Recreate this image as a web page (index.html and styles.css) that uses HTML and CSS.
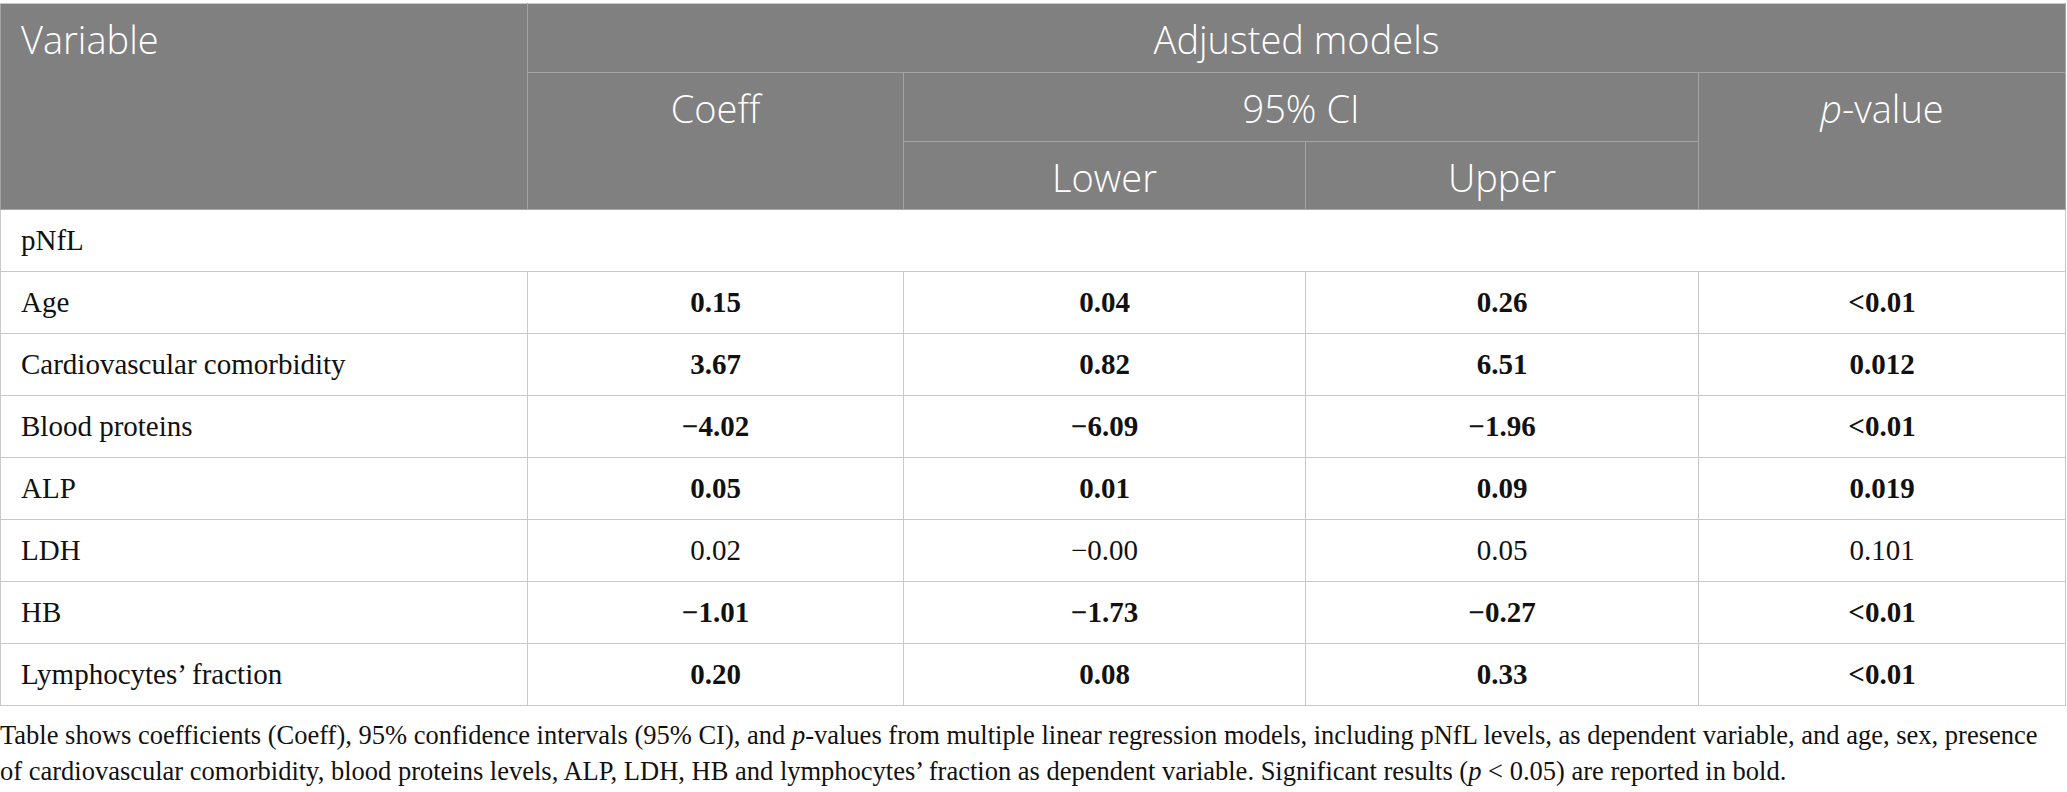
FILE: index.html
```html
<!DOCTYPE html>
<html lang="en">
<head>
<meta charset="utf-8">
<title>Table</title>
<link rel="stylesheet" href="styles.css">
</head>
<body>
<div class="wrap">
<table class="data">
  <colgroup>
    <col class="c1"><col class="c2"><col class="c3"><col class="c4"><col class="c5">
  </colgroup>
  <thead>
    <tr class="h1">
      <th rowspan="3" class="var">Variable</th>
      <th colspan="4">Adjusted models</th>
    </tr>
    <tr class="h2">
      <th rowspan="2">Coeff</th>
      <th colspan="2">95% CI</th>
      <th rowspan="2"><i>p</i>-value</th>
    </tr>
    <tr class="h3">
      <th>Lower</th>
      <th>Upper</th>
    </tr>
  </thead>
  <tbody>
    <tr><td colspan="5" class="group">pNfL</td></tr>
    <tr class="b"><td>Age</td><td>0.15</td><td>0.04</td><td>0.26</td><td>&lt;0.01</td></tr>
    <tr class="b"><td>Cardiovascular comorbidity</td><td>3.67</td><td>0.82</td><td>6.51</td><td>0.012</td></tr>
    <tr class="b"><td>Blood proteins</td><td>&minus;4.02</td><td>&minus;6.09</td><td>&minus;1.96</td><td>&lt;0.01</td></tr>
    <tr class="b"><td>ALP</td><td>0.05</td><td>0.01</td><td>0.09</td><td>0.019</td></tr>
    <tr><td>LDH</td><td>0.02</td><td>&minus;0.00</td><td>0.05</td><td>0.101</td></tr>
    <tr class="b"><td>HB</td><td>&minus;1.01</td><td>&minus;1.73</td><td>&minus;0.27</td><td>&lt;0.01</td></tr>
    <tr class="b"><td>Lymphocytes&rsquo; fraction</td><td>0.20</td><td>0.08</td><td>0.33</td><td>&lt;0.01</td></tr>
  </tbody>
</table>
<p class="caption">Table shows coefficients (Coeff), 95% confidence intervals (95% CI), and <i>p</i>-values from multiple linear regression models, including pNfL levels, as dependent variable, and age, sex, presence<br>of cardiovascular comorbidity, blood proteins levels, ALP, LDH, HB and lymphocytes&rsquo; fraction as dependent variable. Significant results (<i>p</i>&nbsp;&lt;&nbsp;0.05) are reported in bold.</p>
</div>
</body>
</html>
```
FILE: styles.css
```css
html, body {
  margin: 0;
  padding: 0;
  background: #ffffff;
}
.wrap {
  padding-top: 3px;
  width: 2065px;
}
.data {
  border-collapse: collapse;
  table-layout: fixed;
  width: 2065px;
}
.c1 { width: 527px; }
.c2 { width: 376px; }
.c3 { width: 402px; }
.c4 { width: 393px; }
.c5 { width: 367px; }

.data th {
  background: #7f807f;
  color: #ffffff;
  font-family: "Open Sans", "Noto Sans", sans-serif;
  font-weight: 300;
  font-size: 38px;
  line-height: 44px;
  text-align: center;
  vertical-align: top;
  padding: 13px 10px 0;
  border: 1px solid #a3a4a3;
}
.data th.var {
  text-align: left;
  padding-left: 20px;
}
.data th i {
  font-style: italic;
}
.data thead tr.h1 th { height: 55px; border-top-color: #c8c8c8; }
.data thead tr.h2 th { height: 55px; }
.data thead tr.h3 th { height: 54px; }

.data td {
  font-family: "Liberation Serif", "Times New Roman", serif;
  font-size: 29px;
  color: #111111;
  height: 61px;
  padding: 0 10px;
  border: 1px solid #c8c8c8;
  text-align: center;
  vertical-align: middle;
}
.data td:first-child {
  text-align: left;
  padding-left: 20px;
}
.data tr.b td {
  font-weight: 700;
}
.data tr.b td:first-child {
  font-weight: 400;
}
.caption {
  margin: 11px 0 0;
  font-family: "Liberation Serif", "Times New Roman", serif;
  font-size: 26.5px;
  line-height: 36px;
  color: #111111;
  white-space: nowrap;
}
```
